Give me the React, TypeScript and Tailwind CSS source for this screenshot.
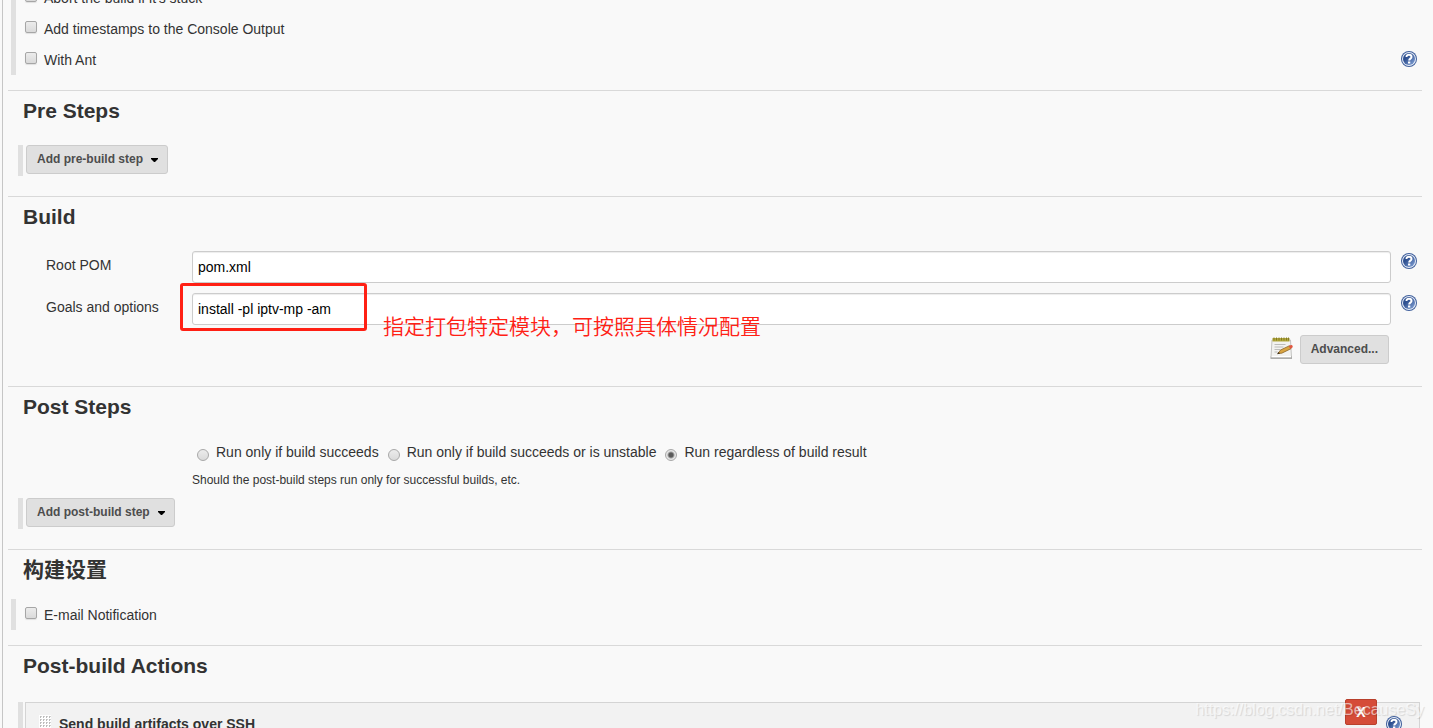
import { useState, type ReactNode } from "react";

function HelpIcon() {
  return (
    <button type="button" aria-label="Help" className="block size-4 shrink-0">
      <svg viewBox="0 0 16 16" className="size-4">
        <defs>
          <linearGradient id="helpFill" x1="0" y1="0" x2="1" y2="1">
            <stop offset="0.35" stopColor="#2f5090" />
            <stop offset="1" stopColor="#8aa9dc" />
          </linearGradient>
        </defs>
        <circle cx="8" cy="8" r="8" fill="#3f5f9c" />
        <circle cx="8" cy="8" r="7" fill="#e8eef8" />
        <circle cx="8" cy="8" r="6" fill="url(#helpFill)" />
        <path
          d="M5.500 6C5.500 4.500 6.500 3.800 8 3.800c1.500 0 2.500.8 2.500 2.100 0 1.700-2.300 1.700-2.300 3.600"
          fill="none"
          stroke="#ffffff"
          strokeWidth="2"
        />
        <rect x="7" y="10.500" width="2.300" height="2" fill="#ffffff" />
      </svg>
    </button>
  );
}

function NotepadIcon() {
  return (
    <svg viewBox="0 0 24 24" className="mt-[2px] size-6" aria-hidden="true">
      <path d="M2 3h18.500l1 17.500H1z" fill="#f2f2f0" stroke="#bdbdbb" strokeWidth="0.9" />
      <path d="M0.500 19.500h21.500v2.500H0.500z" fill="#adadab" />
      <path d="M1.500 19h19.500v1.300H1.500z" fill="#ffffff" />
      <rect x="2.500" y="1" width="17" height="3.500" fill="#b3a93c" />
      <path d="M4 0.500v3M6.500 0.500v3M9 0.500v3M11.500 0.500v3M14 0.500v3M16.500 0.500v3M18.500 0.500v3" stroke="#7d7424" strokeWidth="0.9" />
      <path d="M4.500 7.500h11M4.500 10h9M4.500 12.500h6M4.500 15h3" stroke="#bcbcba" strokeWidth="1" />
      <path d="M8 16.500l2.500-3.500 9-4.300 1.500 3-9.200 4.500z" fill="#d9a441" stroke="#80591c" strokeWidth="0.7" />
      <path d="M18.800 9l2.200-1c1.400-.4 2.400 1.900 1.200 2.700l-2 1z" fill="#e0563f" />
      <path d="M7 17.200l1.500-2.200 1.500 1.600z" fill="#3b2b12" />
    </svg>
  );
}

function DragHandle() {
  return (
    <svg viewBox="0 0 12 16" className="h-4 w-3 shrink-0" aria-hidden="true">
      <defs>
        <pattern id="dots" width="3" height="3" patternUnits="userSpaceOnUse">
          <rect width="3" height="3" fill="#ffffff" />
          <rect x="1" y="1" width="2" height="1" fill="#cfcfcf" />
          <rect x="1" y="1" width="1" height="2" fill="#bcbcbc" />
        </pattern>
      </defs>
      <rect width="12" height="16" fill="url(#dots)" />
    </svg>
  );
}

function CheckRow({ id, label, help }: { id: string; label: string; help?: boolean }) {
  return (
    <div className="flex h-[31px] items-start pr-[5px] pl-[9px]">
      <input
        id={id}
        type="checkbox"
        className="mt-2 size-3 shrink-0 appearance-none rounded-[2px] border border-[#a6a6a6] bg-linear-to-b from-[#ececec] to-[#dadada] shadow-[0_1px_1px_rgba(0,0,0,0.1)] checked:bg-[#666666] checked:bg-none"
      />
      <label htmlFor={id} className="ml-[7px] flex-1 text-sm leading-8">
        {label}
      </label>
      {help && (
        <div className="mt-[7px]">
          <HelpIcon />
        </div>
      )}
    </div>
  );
}

function CheckGroup({ children }: { children: ReactNode }) {
  return <div className="ml-[3px] border-l-[5px] border-[#e0e0e0]">{children}</div>;
}

function Section({ title, children }: { title: string; children: ReactNode }) {
  return (
    <section className="border-t border-[#d9d9d9]">
      <h2 className="h-[49px] pl-[15px] text-[21px] leading-10 font-bold">{title}</h2>
      {children}
    </section>
  );
}

function StepButton({ children }: { children: ReactNode }) {
  return (
    <div className="ml-[10px] flex h-[31px] items-start border-l-[5px] border-[#e0e0e0] pl-[3px]">
      <button
        type="button"
        className="flex h-[29px] items-center gap-2 rounded-[3px] border border-[#cccccc] bg-[#e0e0e0] pr-[9px] pb-px pl-[10px] text-xs font-bold text-[#4d4d4d]"
      >
        {children}
        <svg viewBox="0 0 7 4" className="mt-[2px] h-1 w-[7px]" aria-hidden="true">
          <path d="M0 0h7v1L4 4H3L0 1z" fill="#000000" />
        </svg>
      </button>
    </div>
  );
}

function TextRow({ id, label, initial, children }: { id: string; label: string; initial: string; children?: ReactNode }) {
  const [value, setValue] = useState(initial);
  return (
    <div className="relative flex items-start pr-[5px] pl-[38px]">
      <label htmlFor={id} className="w-[146px] shrink-0 text-sm leading-7">
        {label}
      </label>
      <input
        id={id}
        type="text"
        value={value}
        onChange={(e) => setValue(e.target.value)}
        className="h-8 min-w-0 flex-1 rounded-[3px] border border-[#cccccc] bg-white px-[5px] text-sm text-black shadow-[inset_0_1px_1px_rgba(0,0,0,0.075)]"
      />
      <div className="mt-[2px] ml-[10px]">
        <HelpIcon />
      </div>
      {children}
    </div>
  );
}

const runOptions = ["Run only if build succeeds", "Run only if build succeeds or is unstable", "Run regardless of build result"];

function RunCondition() {
  const [selected, setSelected] = useState(2);
  return (
    <fieldset className="pl-[184px]">
      <div className="flex gap-[9px]">
        {runOptions.map((option, i) => (
          <label key={option} className="flex items-start gap-[7px] text-sm leading-[22px] first:pl-[5px]">
            <input
              type="radio"
              name="run-condition"
              checked={selected === i}
              onChange={() => setSelected(i)}
              className="mt-2 size-3 shrink-0 appearance-none rounded-full border border-[#a8a8a8] bg-linear-to-b from-[#ececec] to-[#dadada] checked:bg-[radial-gradient(circle,#5a5a5a_0,#5a5a5a_2px,#e6e6e6_4px)]"
            />
            {option}
          </label>
        ))}
      </div>
      <p className="mt-[7px] text-xs leading-5">Should the post-build steps run only for successful builds, etc.</p>
    </fieldset>
  );
}

export default function App() {
  return (
    <div className="relative h-screen overflow-hidden bg-[#f9f9f9] pl-[2px] font-['Liberation_Sans','Noto_Sans_CJK_SC',sans-serif] text-[#333333]">
      <main className="min-h-full border-l border-[#c6c6c6] pr-[11px] pl-[5px]">
        <div className="-mt-[18px] pb-[15px]">
          <CheckGroup>
            <CheckRow id="abort" label="Abort the build if it's stuck" />
            <CheckRow id="timestamps" label="Add timestamps to the Console Output" />
            <CheckRow id="ant" label="With Ant" help />
          </CheckGroup>
        </div>

        <Section title="Pre Steps">
          <div className="pt-[5px] pb-5">
            <StepButton>Add pre-build step</StepButton>
          </div>
        </Section>

        <Section title="Build">
          <div className="flex flex-col gap-[10px] pt-[5px] pb-5">
            <TextRow id="pom" label="Root POM" initial="pom.xml" />
            <TextRow id="goals" label="Goals and options" initial="install -pl iptv-mp -am">
              <div className="pointer-events-none absolute -top-[10px] left-[172px] h-12 w-[187px] rounded-[3px] border-3 border-[#ff2014]" />
              <p className="pointer-events-none absolute top-4 left-[375px] font-['Noto_Sans_CJK_SC',sans-serif] text-[21px] leading-8 font-[350] whitespace-nowrap text-[#ff2014]">
                指定打包特定模块，可按照具体情况配置
              </p>
            </TextRow>
            <div className="flex h-[31px] items-start justify-end gap-[6px] pr-[33px]">
              <NotepadIcon />
              <button
                type="button"
                className="h-[29px] rounded-[3px] border border-[#cccccc] bg-[#e0e0e0] px-[10px] pb-px text-xs font-bold text-[#4d4d4d]"
              >
                Advanced...
              </button>
            </div>
          </div>
        </Section>

        <Section title="Post Steps">
          <div className="pt-[5px] pb-5">
            <RunCondition />
            <div className="mt-2">
              <StepButton>Add post-build step</StepButton>
            </div>
          </div>
        </Section>

        <Section title="构建设置">
          <div className="pb-[15px]">
            <CheckGroup>
              <CheckRow id="email" label="E-mail Notification" />
            </CheckGroup>
          </div>
        </Section>

        <Section title="Post-build Actions">
          <div className="mt-[7px] mr-[2px] ml-[10px] border-l-[5px] border-[#e0e0e0] pl-[2px]">
            <div className="relative flex h-20 items-start border border-[#d4d4d4] bg-[#f2f2f2] pt-3 pr-[17px] pl-[13px]">
              <DragHandle />
              <h3 className="ml-2 flex-1 text-sm leading-[18px] font-bold">Send build artifacts over SSH</h3>
              <button
                type="button"
                aria-label="Delete"
                className="absolute -top-1 right-[42px] h-[26px] w-8 rounded-[2px] border border-[#b8402c] bg-[#d54c38] text-sm leading-5 font-bold text-white"
              >
                X
              </button>
              <div className="mt-px">
                <HelpIcon />
              </div>
            </div>
          </div>
        </Section>
      </main>
      <p className="pointer-events-none absolute right-[9px] bottom-[6px] text-base leading-6 text-white/60 [text-shadow:1px_1px_1px_rgba(0,0,0,0.12)]">
        https://blog.csdn.net/BecauseSy
      </p>
    </div>
  );
}
